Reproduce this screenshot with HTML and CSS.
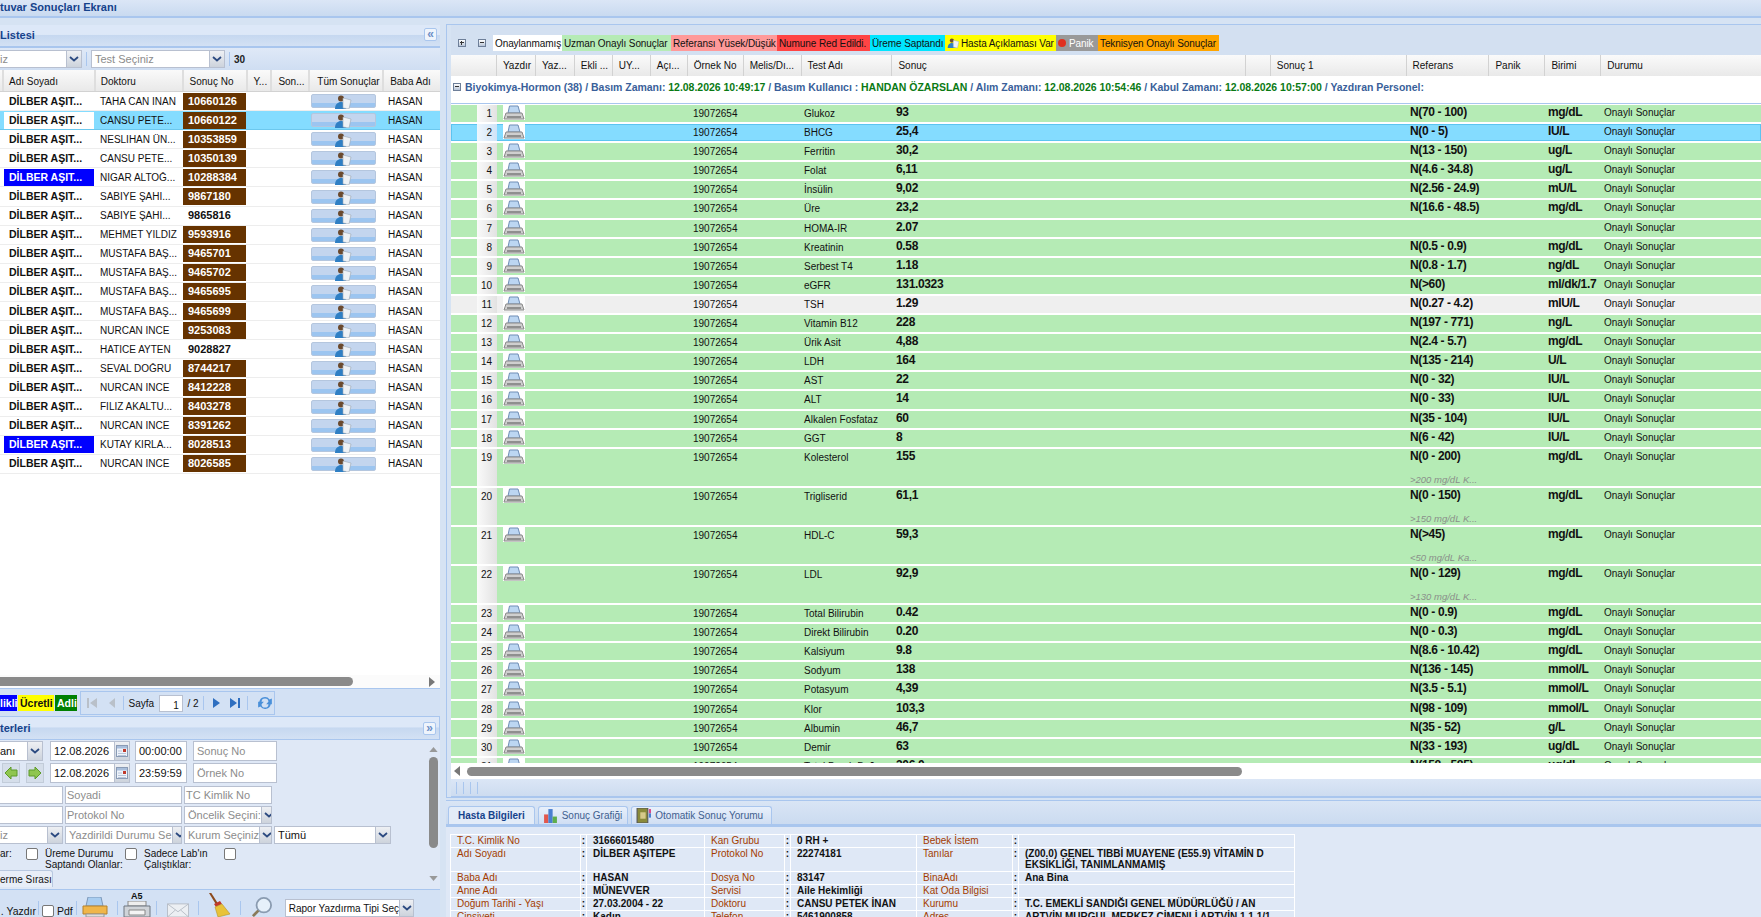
FILE: index.html
```html
<!DOCTYPE html>
<html lang="tr">
<head>
    <meta charset="UTF-8">
    <title>Kuvar Sonuçları Ekranı</title>
    <link rel="stylesheet" href="styles.css">
</head>
<body>
    <svg class="defs" width="0" height="0">
        <symbol id="printer" viewBox="0 0 22 15">
            <path d="M6.500 1h8.500l2 7H5z" fill="#bcd6f2" stroke="#6f8db5"/>
            <path d="M3 8h16l2 6H1z" fill="#cfcfcf" stroke="#8a8a8a"/>
            <rect x="4" y="11" width="14" height="2" fill="#8f8f8f"/>
        </symbol>
        <symbol id="chev" viewBox="0 0 10 6">
            <path d="M1 1l4 3.500L9 1" fill="none" stroke="#2c4a80" stroke-width="1.800"/>
        </symbol>
        <symbol id="person" viewBox="0 0 20 14">
            <circle cx="7" cy="3.500" r="3" fill="#6b4a2e"/>
            <path d="M1 14c0-5 3-7 6-7s5 2 5 7z" fill="#2f7fc4"/>
            <path d="M9 3l8 2-2 9-6-1z" fill="#eef2f6" stroke="#9aa6b2" stroke-width=".6"/>
        </symbol>
        <symbol id="cal" viewBox="0 0 12 12">
            <rect x=".5" y=".5" width="11" height="11" fill="#eef3fa" stroke="#8a9bb5"/>
            <rect x="1" y="1" width="10" height="2.500" fill="#a9bedb"/>
            <rect x="7" y="4" width="3" height="3" fill="#c0392b"/>
            <path d="M2 6h4M2 8.500h8M2 10.500h8" stroke="#b9c6da"/>
        </symbol>
    </svg>

    <header class="topbar"><span class="title-text">tuvar Sonuçları Ekranı</span></header>

    <div class="main">
        <aside class="left">
            <div class="panel-title list-title">
                <span class="title-text">Listesi</span>
                <span class="tool-btn">«</span>
            </div>
            <div class="list-toolbar">
                <div class="fld w-sel1 hint">iz<span class="arr"><svg class="chev"><use href="#chev"/></svg></span></div>
                <i class="sep"></i>
                <div class="fld w-sel2 hint">Test Seçiniz<span class="arr"><svg class="chev"><use href="#chev"/></svg></span></div>
                <i class="sep"></i>
                <b class="count">30</b>
            </div>

            <div class="list-row list-head">
                <span class="c-edge"></span>
                <span class="h-name">Adı Soyadı</span>
                <span class="h-doc">Doktoru</span>
                <span class="h-no">Sonuç No</span>
                <span class="h-y">Y...</span>
                <span class="h-son">Son...</span>
                <span class="h-all">Tüm Sonuçlar</span>
                <span class="h-baba">Baba Adı</span>
            </div>

            <div class="list-body">
                <div class="list-row"><span class="c-edge"></span><b class="c-name">DİLBER AŞIT...</b><span class="c-doc">TAHA CAN İNAN</span><b class="c-no">10660126</b><span class="c-blank"></span><span class="c-all"><svg class="pic"><use href="#person"/></svg></span><span class="c-baba">HASAN</span></div>
                <div class="list-row sel"><span class="c-edge"></span><b class="c-name">DİLBER AŞIT...</b><span class="c-doc">CANSU PETE...</span><b class="c-no">10660122</b><span class="c-blank"></span><span class="c-all"><svg class="pic"><use href="#person"/></svg></span><span class="c-baba">HASAN</span></div>
                <div class="list-row"><span class="c-edge"></span><b class="c-name">DİLBER AŞIT...</b><span class="c-doc">NESLİHAN ÜN...</span><b class="c-no">10353859</b><span class="c-blank"></span><span class="c-all"><svg class="pic"><use href="#person"/></svg></span><span class="c-baba">HASAN</span></div>
                <div class="list-row"><span class="c-edge"></span><b class="c-name">DİLBER AŞIT...</b><span class="c-doc">CANSU PETE...</span><b class="c-no">10350139</b><span class="c-blank"></span><span class="c-all"><svg class="pic"><use href="#person"/></svg></span><span class="c-baba">HASAN</span></div>
                <div class="list-row"><span class="c-edge"></span><b class="c-name blue">DİLBER AŞIT...</b><span class="c-doc">NİGAR ALTOĞ...</span><b class="c-no">10288384</b><span class="c-blank"></span><span class="c-all"><svg class="pic"><use href="#person"/></svg></span><span class="c-baba">HASAN</span></div>
                <div class="list-row"><span class="c-edge"></span><b class="c-name">DİLBER AŞIT...</b><span class="c-doc">SABİYE ŞAHİ...</span><b class="c-no">9867180</b><span class="c-blank"></span><span class="c-all"><svg class="pic"><use href="#person"/></svg></span><span class="c-baba">HASAN</span></div>
                <div class="list-row"><span class="c-edge"></span><b class="c-name">DİLBER AŞIT...</b><span class="c-doc">SABİYE ŞAHİ...</span><b class="c-no plain">9865816</b><span class="c-blank"></span><span class="c-all"><svg class="pic"><use href="#person"/></svg></span><span class="c-baba">HASAN</span></div>
                <div class="list-row"><span class="c-edge"></span><b class="c-name">DİLBER AŞIT...</b><span class="c-doc">MEHMET YILDIZ</span><b class="c-no">9593916</b><span class="c-blank"></span><span class="c-all"><svg class="pic"><use href="#person"/></svg></span><span class="c-baba">HASAN</span></div>
                <div class="list-row"><span class="c-edge"></span><b class="c-name">DİLBER AŞIT...</b><span class="c-doc">MUSTAFA BAŞ...</span><b class="c-no">9465701</b><span class="c-blank"></span><span class="c-all"><svg class="pic"><use href="#person"/></svg></span><span class="c-baba">HASAN</span></div>
                <div class="list-row"><span class="c-edge"></span><b class="c-name">DİLBER AŞIT...</b><span class="c-doc">MUSTAFA BAŞ...</span><b class="c-no">9465702</b><span class="c-blank"></span><span class="c-all"><svg class="pic"><use href="#person"/></svg></span><span class="c-baba">HASAN</span></div>
                <div class="list-row"><span class="c-edge"></span><b class="c-name">DİLBER AŞIT...</b><span class="c-doc">MUSTAFA BAŞ...</span><b class="c-no">9465695</b><span class="c-blank"></span><span class="c-all"><svg class="pic"><use href="#person"/></svg></span><span class="c-baba">HASAN</span></div>
                <div class="list-row"><span class="c-edge"></span><b class="c-name">DİLBER AŞIT...</b><span class="c-doc">MUSTAFA BAŞ...</span><b class="c-no">9465699</b><span class="c-blank"></span><span class="c-all"><svg class="pic"><use href="#person"/></svg></span><span class="c-baba">HASAN</span></div>
                <div class="list-row"><span class="c-edge"></span><b class="c-name">DİLBER AŞIT...</b><span class="c-doc">NURCAN İNCE</span><b class="c-no">9253083</b><span class="c-blank"></span><span class="c-all"><svg class="pic"><use href="#person"/></svg></span><span class="c-baba">HASAN</span></div>
                <div class="list-row"><span class="c-edge"></span><b class="c-name">DİLBER AŞIT...</b><span class="c-doc">HATİCE AYTEN</span><b class="c-no plain">9028827</b><span class="c-blank"></span><span class="c-all"><svg class="pic"><use href="#person"/></svg></span><span class="c-baba">HASAN</span></div>
                <div class="list-row"><span class="c-edge"></span><b class="c-name">DİLBER AŞIT...</b><span class="c-doc">SEVAL DOĞRU</span><b class="c-no">8744217</b><span class="c-blank"></span><span class="c-all"><svg class="pic"><use href="#person"/></svg></span><span class="c-baba">HASAN</span></div>
                <div class="list-row"><span class="c-edge"></span><b class="c-name">DİLBER AŞIT...</b><span class="c-doc">NURCAN İNCE</span><b class="c-no">8412228</b><span class="c-blank"></span><span class="c-all"><svg class="pic"><use href="#person"/></svg></span><span class="c-baba">HASAN</span></div>
                <div class="list-row"><span class="c-edge"></span><b class="c-name">DİLBER AŞIT...</b><span class="c-doc">FİLİZ AKALTU...</span><b class="c-no">8403278</b><span class="c-blank"></span><span class="c-all"><svg class="pic"><use href="#person"/></svg></span><span class="c-baba">HASAN</span></div>
                <div class="list-row"><span class="c-edge"></span><b class="c-name">DİLBER AŞIT...</b><span class="c-doc">NURCAN İNCE</span><b class="c-no">8391262</b><span class="c-blank"></span><span class="c-all"><svg class="pic"><use href="#person"/></svg></span><span class="c-baba">HASAN</span></div>
                <div class="list-row"><span class="c-edge"></span><b class="c-name blue">DİLBER AŞIT...</b><span class="c-doc">KUTAY KIRLA...</span><b class="c-no">8028513</b><span class="c-blank"></span><span class="c-all"><svg class="pic"><use href="#person"/></svg></span><span class="c-baba">HASAN</span></div>
                <div class="list-row"><span class="c-edge"></span><b class="c-name">DİLBER AŞIT...</b><span class="c-doc">NURCAN İNCE</span><b class="c-no">8026585</b><span class="c-blank"></span><span class="c-all"><svg class="pic"><use href="#person"/></svg></span><span class="c-baba">HASAN</span></div>
            </div>

            <div class="list-scroll">
                <span class="thumb-h"></span>
                <svg class="arrow-r" viewBox="0 0 6 10"><path d="M0 0l6 5-6 5z" fill="#777"/></svg>
            </div>

            <div class="pager-bar">
                <b class="tag tag-blue">likli</b>
                <b class="tag tag-yellow">Ücretli</b>
                <b class="tag tag-green">Adli</b>
                <div class="pager">
                    <svg class="pg" viewBox="0 0 12 12"><path d="M1 1h2v10H1zM11 1v10L4 6z" fill="#b9c0c9"/></svg>
                    <svg class="pg" viewBox="0 0 12 12"><path d="M9 1v10L3 6z" fill="#b9c0c9"/></svg>
                    <i class="sep"></i>
                    <span class="pg-label">Sayfa</span>
                    <span class="pg-input">1</span>
                    <span class="pg-label">/ 2</span>
                    <i class="sep"></i>
                    <svg class="pg" viewBox="0 0 12 12"><path d="M3 1v10l7-5z" fill="#2f6fc0"/></svg>
                    <svg class="pg" viewBox="0 0 12 12"><path d="M1 1v10l7-5zM9 1h2v10H9z" fill="#2f6fc0"/></svg>
                    <i class="sep"></i>
                    <svg class="pg pg-refresh" viewBox="0 0 14 14"><path d="M2 6a5 5 0 0 1 9-2l2-1v5H8l2-2a3 3 0 0 0-6 0zM12 8a5 5 0 0 1-9 2l-2 1V6h5L4 8a3 3 0 0 0 6 0z" fill="#4a90d9"/></svg>
                </div>
            </div>

            <div class="panel-title crit-title">
                <span class="title-text">terleri</span>
                <span class="tool-btn">»</span>
            </div>

            <div class="crit">
                <div class="crit-form">
                    <div class="crit-row r-top">
                        <div class="fld w-43">anı<span class="arr"><svg class="chev"><use href="#chev"/></svg></span></div>
                        <div class="fld w-date">12.08.2026<span class="arr"><svg class="cal"><use href="#cal"/></svg></span></div>
                        <div class="fld w-time">00:00:00</div>
                        <div class="fld w-no hint">Sonuç No</div>
                    </div>
                    <div class="crit-row r-top r-last">
                        <div class="nav-btns">
                            <span class="nav-btn"><svg viewBox="0 0 14 14"><path d="M7 1v3h6v6H7v3L1 7z" fill="#8fc64f" stroke="#5c9a2a"/></svg></span>
                            <span class="nav-btn"><svg viewBox="0 0 14 14"><path d="M7 1v3H1v6h6v3l6-6z" fill="#8fc64f" stroke="#5c9a2a"/></svg></span>
                        </div>
                        <div class="fld w-date">12.08.2026<span class="arr"><svg class="cal"><use href="#cal"/></svg></span></div>
                        <div class="fld w-time">23:59:59</div>
                        <div class="fld w-no hint">Örnek No</div>
                    </div>
                    <div class="crit-row r-mid">
                        <div class="fld f-63"></div>
                        <div class="fld f-117 hint tight">Soyadi</div>
                        <div class="fld f-88 hint tight">TC Kimlik No</div>
                    </div>
                    <div class="crit-row r-mid">
                        <div class="fld f-63"></div>
                        <div class="fld f-117 hint tight">Protokol No</div>
                        <div class="fld f-88 hint">Öncelik Seçini:<span class="arr"><svg class="chev"><use href="#chev"/></svg></span></div>
                    </div>
                    <div class="crit-row r-mid">
                        <div class="fld f-63 hint">iz<span class="arr"><svg class="chev"><use href="#chev"/></svg></span></div>
                        <div class="fld f-117 hint">Yazdirildi Durumu Se<span class="arr"><svg class="chev"><use href="#chev"/></svg></span></div>
                        <div class="fld f-88 hint">Kurum Seçiniz<span class="arr"><svg class="chev"><use href="#chev"/></svg></span></div>
                        <div class="fld f-117">Tümü<span class="arr"><svg class="chev"><use href="#chev"/></svg></span></div>
                    </div>
                    <div class="check-row">
                        <span class="ck-label ck-a">ar:</span><i class="ck"></i>
                        <span class="ck-label ck-b">Üreme Durumu Saptandı Olanlar:</span><i class="ck"></i>
                        <span class="ck-label ck-c">Sadece Lab'ın Çalıştıklar:</span><i class="ck"></i>
                    </div>
                    <div class="crit-tab">erme Sırası</div>
                </div>
                <div class="crit-scroll">
                    <svg class="sc-arrow" viewBox="0 0 10 6"><path d="M0 6l5-6 5 6z" fill="#999"/></svg>
                    <span class="thumb-v"></span>
                    <svg class="sc-arrow" viewBox="0 0 10 6"><path d="M0 0l5 6 5-6z" fill="#999"/></svg>
                </div>
            </div>

            <div class="bottom-tools">
                <span class="bt-label bt-yazdir">. Yazdır</span>
                <i class="sep"></i>
                <i class="ck m3"></i>
                <span class="bt-label m3">Pdf</span>
                <i class="sep m3"></i>
                <svg class="bt-icon m5" viewBox="0 0 26 20"><path d="M6 0h13l2 9H4z" fill="#a9cdf0" stroke="#7d97b8"/><path d="M1 9h24v8H1z" fill="#f0b64a" stroke="#b5812a"/><path d="M4 17h18v3H4z" fill="#ddd" stroke="#999"/></svg>
                <i class="sep m9"></i>
                <span class="a5 m5"><b class="a5-text">A5</b><svg viewBox="0 0 28 16"><path d="M5 0h18v5H5z" fill="#eee" stroke="#888"/><path d="M1 5h26v11H1z" fill="#cfd3d8" stroke="#6f7680"/><path d="M6 9h16v5H6z" fill="#f4f4f4" stroke="#888"/></svg></span>
                <i class="sep m5"></i>
                <svg class="bt-icon env m8" viewBox="0 0 26 16"><path d="M1 1h24v15H1z" fill="#eceff3" stroke="#b3bac4"/><path d="M1 1l12 9L25 1M1 16l9-8M25 16l-9-8" fill="none" stroke="#b3bac4"/></svg>
                <i class="sep m7"></i>
                <svg class="bt-icon broom m7" viewBox="0 0 26 24"><path d="M3 0l2-.5 7 11-2 1z" fill="#8c4a1c"/><path d="M8 11l6-3 2 3-6 3z" fill="#c0392b"/><path d="M9 14l7-3 8 10-12 3z" fill="#e8c33a" stroke="#b8932a" stroke-width=".6"/></svg>
                <i class="sep m8"></i>
                <svg class="bt-icon lens m9" viewBox="0 0 24 22"><circle cx="14" cy="9" r="8" fill="#e6f0fa" stroke="#8a9bb0" stroke-width="2"/><path d="M8 15l-6 6" stroke="#8a7a5a" stroke-width="3"/></svg>
                <div class="fld w-report">Rapor Yazdırma Tipi Seç<span class="arr"><svg class="chev"><use href="#chev"/></svg></span></div>
            </div>
        </aside>

        <section class="right">
            <div class="results">
                <div class="legend">
                    <span class="lg-icons"><i class="box plus"></i><i class="box"></i></span>
                    <span class="lg lg-white">Onaylanmamış</span>
                    <span class="lg lg-green">Uzman Onaylı Sonuçlar</span>
                    <span class="lg lg-pink">Referansı Yüsek/Düşük</span>
                    <span class="lg lg-red">Numune Red Edildi.</span>
                    <span class="lg lg-cyan">Üreme Saptandı</span>
                    <span class="lg lg-yellow"><svg class="lg-pic"><use href="#person"/></svg>Hasta Açıklaması Var</span>
                    <span class="lg lg-grey"><i class="dot"></i>Panik</span>
                    <span class="lg lg-orange">Teknisyen Onaylı Sonuçlar</span>
                </div>

                <div class="res-head">
                    <span class="rh-blank"></span>
                    <span class="rh-1">Yazdır</span>
                    <span class="rh-1">Yaz...</span>
                    <span class="rh-2">Ekli ...</span>
                    <span class="rh-2">UY...</span>
                    <span class="rh-3">Açı...</span>
                    <span class="rh-4">Örnek No</span>
                    <span class="rh-5">Melis/Dı...</span>
                    <span class="rh-6">Test Adı</span>
                    <span class="rh-7">Sonuç</span>
                    <span class="rh-8"></span>
                    <span class="rh-9">Sonuç 1</span>
                    <span class="rh-10">Referans</span>
                    <span class="rh-11">Panik</span>
                    <span class="rh-11">Birimi</span>
                    <span class="rh-12">Durumu</span>
                </div>

                <div class="group-row">
                    <i class="box"></i>
                    <span class="group-text">Biyokimya-Hormon (38) / Basım Zamanı: <em>12.08.2026 10:49:17</em> / Basım Kullanıcı : <em>HANDAN ÖZARSLAN</em> / Alım Zamanı: <em>12.08.2026 10:54:46</em> / Kabul Zamanı: <em>12.08.2026 10:57:00</em> / Yazdıran Personel:</span>
                </div>

                <div class="res-body">
                    <div class="res-row"><span></span><span class="r-num">1</span><span class="r-prn"><svg class="prn"><use href="#printer"/></svg></span><span class="r-no">19072654</span><span class="r-test">Glukoz</span><b class="r-val">93</b><b class="r-ref">N(70 - 100)</b><b class="r-unit">mg/dL</b><span class="r-st">Onaylı Sonuçlar</span></div>
                    <div class="res-row sel"><span></span><span class="r-num">2</span><span class="r-prn"><svg class="prn"><use href="#printer"/></svg></span><span class="r-no">19072654</span><span class="r-test">BHCG</span><b class="r-val">25,4</b><b class="r-ref">N(0 - 5)</b><b class="r-unit">IU/L</b><span class="r-st">Onaylı Sonuçlar</span></div>
                    <div class="res-row"><span></span><span class="r-num">3</span><span class="r-prn"><svg class="prn"><use href="#printer"/></svg></span><span class="r-no">19072654</span><span class="r-test">Ferritin</span><b class="r-val">30,2</b><b class="r-ref">N(13 - 150)</b><b class="r-unit">ug/L</b><span class="r-st">Onaylı Sonuçlar</span></div>
                    <div class="res-row"><span></span><span class="r-num">4</span><span class="r-prn"><svg class="prn"><use href="#printer"/></svg></span><span class="r-no">19072654</span><span class="r-test">Folat</span><b class="r-val">6,11</b><b class="r-ref">N(4.6 - 34.8)</b><b class="r-unit">ug/L</b><span class="r-st">Onaylı Sonuçlar</span></div>
                    <div class="res-row"><span></span><span class="r-num">5</span><span class="r-prn"><svg class="prn"><use href="#printer"/></svg></span><span class="r-no">19072654</span><span class="r-test">İnsülin</span><b class="r-val">9,02</b><b class="r-ref">N(2.56 - 24.9)</b><b class="r-unit">mU/L</b><span class="r-st">Onaylı Sonuçlar</span></div>
                    <div class="res-row"><span></span><span class="r-num">6</span><span class="r-prn"><svg class="prn"><use href="#printer"/></svg></span><span class="r-no">19072654</span><span class="r-test">Üre</span><b class="r-val">23,2</b><b class="r-ref">N(16.6 - 48.5)</b><b class="r-unit">mg/dL</b><span class="r-st">Onaylı Sonuçlar</span></div>
                    <div class="res-row"><span></span><span class="r-num">7</span><span class="r-prn"><svg class="prn"><use href="#printer"/></svg></span><span class="r-no">19072654</span><span class="r-test">HOMA-IR</span><b class="r-val">2.07</b><b class="r-ref"></b><b class="r-unit"></b><span class="r-st">Onaylı Sonuçlar</span></div>
                    <div class="res-row"><span></span><span class="r-num">8</span><span class="r-prn"><svg class="prn"><use href="#printer"/></svg></span><span class="r-no">19072654</span><span class="r-test">Kreatinin</span><b class="r-val">0.58</b><b class="r-ref">N(0.5 - 0.9)</b><b class="r-unit">mg/dL</b><span class="r-st">Onaylı Sonuçlar</span></div>
                    <div class="res-row"><span></span><span class="r-num">9</span><span class="r-prn"><svg class="prn"><use href="#printer"/></svg></span><span class="r-no">19072654</span><span class="r-test">Serbest T4</span><b class="r-val">1.18</b><b class="r-ref">N(0.8 - 1.7)</b><b class="r-unit">ng/dL</b><span class="r-st">Onaylı Sonuçlar</span></div>
                    <div class="res-row"><span></span><span class="r-num">10</span><span class="r-prn"><svg class="prn"><use href="#printer"/></svg></span><span class="r-no">19072654</span><span class="r-test">eGFR</span><b class="r-val">131.0323</b><b class="r-ref">N(&gt;60)</b><b class="r-unit">ml/dk/1.7</b><span class="r-st">Onaylı Sonuçlar</span></div>
                    <div class="res-row grey"><span></span><span class="r-num">11</span><span class="r-prn"><svg class="prn"><use href="#printer"/></svg></span><span class="r-no">19072654</span><span class="r-test">TSH</span><b class="r-val">1.29</b><b class="r-ref">N(0.27 - 4.2)</b><b class="r-unit">mIU/L</b><span class="r-st">Onaylı Sonuçlar</span></div>
                    <div class="res-row"><span></span><span class="r-num">12</span><span class="r-prn"><svg class="prn"><use href="#printer"/></svg></span><span class="r-no">19072654</span><span class="r-test">Vitamin B12</span><b class="r-val">228</b><b class="r-ref">N(197 - 771)</b><b class="r-unit">ng/L</b><span class="r-st">Onaylı Sonuçlar</span></div>
                    <div class="res-row"><span></span><span class="r-num">13</span><span class="r-prn"><svg class="prn"><use href="#printer"/></svg></span><span class="r-no">19072654</span><span class="r-test">Ürik Asit</span><b class="r-val">4,88</b><b class="r-ref">N(2.4 - 5.7)</b><b class="r-unit">mg/dL</b><span class="r-st">Onaylı Sonuçlar</span></div>
                    <div class="res-row"><span></span><span class="r-num">14</span><span class="r-prn"><svg class="prn"><use href="#printer"/></svg></span><span class="r-no">19072654</span><span class="r-test">LDH</span><b class="r-val">164</b><b class="r-ref">N(135 - 214)</b><b class="r-unit">U/L</b><span class="r-st">Onaylı Sonuçlar</span></div>
                    <div class="res-row"><span></span><span class="r-num">15</span><span class="r-prn"><svg class="prn"><use href="#printer"/></svg></span><span class="r-no">19072654</span><span class="r-test">AST</span><b class="r-val">22</b><b class="r-ref">N(0 - 32)</b><b class="r-unit">IU/L</b><span class="r-st">Onaylı Sonuçlar</span></div>
                    <div class="res-row"><span></span><span class="r-num">16</span><span class="r-prn"><svg class="prn"><use href="#printer"/></svg></span><span class="r-no">19072654</span><span class="r-test">ALT</span><b class="r-val">14</b><b class="r-ref">N(0 - 33)</b><b class="r-unit">IU/L</b><span class="r-st">Onaylı Sonuçlar</span></div>
                    <div class="res-row"><span></span><span class="r-num">17</span><span class="r-prn"><svg class="prn"><use href="#printer"/></svg></span><span class="r-no">19072654</span><span class="r-test">Alkalen Fosfataz</span><b class="r-val">60</b><b class="r-ref">N(35 - 104)</b><b class="r-unit">IU/L</b><span class="r-st">Onaylı Sonuçlar</span></div>
                    <div class="res-row"><span></span><span class="r-num">18</span><span class="r-prn"><svg class="prn"><use href="#printer"/></svg></span><span class="r-no">19072654</span><span class="r-test">GGT</span><b class="r-val">8</b><b class="r-ref">N(6 - 42)</b><b class="r-unit">IU/L</b><span class="r-st">Onaylı Sonuçlar</span></div>
                    <div class="res-row tall"><span></span><span class="r-num">19</span><span class="r-prn"><svg class="prn"><use href="#printer"/></svg></span><span class="r-no">19072654</span><span class="r-test">Kolesterol</span><b class="r-val">155</b><div class="r-ref"><b>N(0 - 200)</b><i class="r-note">&gt;200 mg/dL K...</i></div><b class="r-unit">mg/dL</b><span class="r-st">Onaylı Sonuçlar</span></div>
                    <div class="res-row tall"><span></span><span class="r-num">20</span><span class="r-prn"><svg class="prn"><use href="#printer"/></svg></span><span class="r-no">19072654</span><span class="r-test">Trigliserid</span><b class="r-val">61,1</b><div class="r-ref"><b>N(0 - 150)</b><i class="r-note">&gt;150 mg/dL K...</i></div><b class="r-unit">mg/dL</b><span class="r-st">Onaylı Sonuçlar</span></div>
                    <div class="res-row tall"><span></span><span class="r-num">21</span><span class="r-prn"><svg class="prn"><use href="#printer"/></svg></span><span class="r-no">19072654</span><span class="r-test">HDL-C</span><b class="r-val">59,3</b><div class="r-ref"><b>N(&gt;45)</b><i class="r-note">&lt;50 mg/dL Ka...</i></div><b class="r-unit">mg/dL</b><span class="r-st">Onaylı Sonuçlar</span></div>
                    <div class="res-row tall"><span></span><span class="r-num">22</span><span class="r-prn"><svg class="prn"><use href="#printer"/></svg></span><span class="r-no">19072654</span><span class="r-test">LDL</span><b class="r-val">92,9</b><div class="r-ref"><b>N(0 - 129)</b><i class="r-note">&gt;130 mg/dL K...</i></div><b class="r-unit">mg/dL</b><span class="r-st">Onaylı Sonuçlar</span></div>
                    <div class="res-row"><span></span><span class="r-num">23</span><span class="r-prn"><svg class="prn"><use href="#printer"/></svg></span><span class="r-no">19072654</span><span class="r-test">Total Bilirubin</span><b class="r-val">0.42</b><b class="r-ref">N(0 - 0.9)</b><b class="r-unit">mg/dL</b><span class="r-st">Onaylı Sonuçlar</span></div>
                    <div class="res-row"><span></span><span class="r-num">24</span><span class="r-prn"><svg class="prn"><use href="#printer"/></svg></span><span class="r-no">19072654</span><span class="r-test">Direkt Bilirubin</span><b class="r-val">0.20</b><b class="r-ref">N(0 - 0.3)</b><b class="r-unit">mg/dL</b><span class="r-st">Onaylı Sonuçlar</span></div>
                    <div class="res-row"><span></span><span class="r-num">25</span><span class="r-prn"><svg class="prn"><use href="#printer"/></svg></span><span class="r-no">19072654</span><span class="r-test">Kalsiyum</span><b class="r-val">9.8</b><b class="r-ref">N(8.6 - 10.42)</b><b class="r-unit">mg/dL</b><span class="r-st">Onaylı Sonuçlar</span></div>
                    <div class="res-row"><span></span><span class="r-num">26</span><span class="r-prn"><svg class="prn"><use href="#printer"/></svg></span><span class="r-no">19072654</span><span class="r-test">Sodyum</span><b class="r-val">138</b><b class="r-ref">N(136 - 145)</b><b class="r-unit">mmol/L</b><span class="r-st">Onaylı Sonuçlar</span></div>
                    <div class="res-row"><span></span><span class="r-num">27</span><span class="r-prn"><svg class="prn"><use href="#printer"/></svg></span><span class="r-no">19072654</span><span class="r-test">Potasyum</span><b class="r-val">4,39</b><b class="r-ref">N(3.5 - 5.1)</b><b class="r-unit">mmol/L</b><span class="r-st">Onaylı Sonuçlar</span></div>
                    <div class="res-row"><span></span><span class="r-num">28</span><span class="r-prn"><svg class="prn"><use href="#printer"/></svg></span><span class="r-no">19072654</span><span class="r-test">Klor</span><b class="r-val">103,3</b><b class="r-ref">N(98 - 109)</b><b class="r-unit">mmol/L</b><span class="r-st">Onaylı Sonuçlar</span></div>
                    <div class="res-row"><span></span><span class="r-num">29</span><span class="r-prn"><svg class="prn"><use href="#printer"/></svg></span><span class="r-no">19072654</span><span class="r-test">Albumin</span><b class="r-val">46,7</b><b class="r-ref">N(35 - 52)</b><b class="r-unit">g/L</b><span class="r-st">Onaylı Sonuçlar</span></div>
                    <div class="res-row"><span></span><span class="r-num">30</span><span class="r-prn"><svg class="prn"><use href="#printer"/></svg></span><span class="r-no">19072654</span><span class="r-test">Demir</span><b class="r-val">63</b><b class="r-ref">N(33 - 193)</b><b class="r-unit">ug/dL</b><span class="r-st">Onaylı Sonuçlar</span></div>
                    <div class="res-row"><span></span><span class="r-num">31</span><span class="r-prn"><svg class="prn"><use href="#printer"/></svg></span><span class="r-no">19072654</span><span class="r-test">Total Demir Bağ.</span><b class="r-val">306.0</b><b class="r-ref">N(158 - 585)</b><b class="r-unit">ug/dL</b><span class="r-st">Onaylı Sonuçlar</span></div>
                </div>

                <div class="res-scroll">
                    <svg class="arrow-l" viewBox="0 0 6 10"><path d="M6 0L0 5l6 5z" fill="#777"/></svg>
                    <span class="thumb-res"></span>
                </div>
                <div class="res-foot"><i></i><i></i><i></i><i></i></div>
            </div>

            <div class="tabs">
                <span class="tab active">Hasta Bilgileri</span>
                <span class="tab tab-chart"><svg class="tab-ic" viewBox="0 0 14 14"><path d="M1 6h4v8H1z" fill="#e2574c"/><path d="M5 1h4v13H5z" fill="#4a7fd0"/><path d="M9 8h4v6H9z" fill="#5fae4a"/></svg>Sonuç Grafiği</span>
                <span class="tab"><svg class="tab-ic" viewBox="0 0 14 14"><path d="M1 0h10v14H1z" fill="#8a8a3a" stroke="#555"/><rect x="4" y="4" width="5" height="6" fill="#d6c98a"/><path d="M12 1h2v4h-2z" fill="#d84a8a"/><path d="M12 5h2v4h-2z" fill="#4a7fd0"/></svg>Otomatik Sonuç Yorumu</span>
            </div>

            <div class="info">
                <table class="info-table">
                    <tr><td class="lb">T.C. Kimlik No</td><td class="cl">:</td><td class="vl">31666015480</td><td class="lb">Kan Grubu</td><td class="cl">:</td><td class="vl">0 RH +</td><td class="lb">Bebek İstem</td><td class="cl">:</td><td class="vl"></td></tr>
                    <tr class="tall-info"><td class="lb">Adı Soyadı</td><td class="cl">:</td><td class="vl">DİLBER AŞITEPE</td><td class="lb">Protokol No</td><td class="cl">:</td><td class="vl">22274181</td><td class="lb">Tanılar</td><td class="cl">:</td><td class="vl">(Z00.0) GENEL TIBBİ MUAYENE (E55.9) VİTAMİN D EKSİKLİĞİ, TANIMLANMAMIŞ</td></tr>
                    <tr><td class="lb">Baba Adı</td><td class="cl">:</td><td class="vl">HASAN</td><td class="lb">Dosya No</td><td class="cl">:</td><td class="vl">83147</td><td class="lb">BinaAdı</td><td class="cl">:</td><td class="vl">Ana Bina</td></tr>
                    <tr><td class="lb">Anne Adı</td><td class="cl">:</td><td class="vl">MÜNEVVER</td><td class="lb">Servisi</td><td class="cl">:</td><td class="vl">Aile Hekimliği</td><td class="lb">Kat Oda Bilgisi</td><td class="cl">:</td><td class="vl"></td></tr>
                    <tr><td class="lb">Doğum Tarihi - Yaşı</td><td class="cl">:</td><td class="vl">27.03.2004 - 22</td><td class="lb">Doktoru</td><td class="cl">:</td><td class="vl">CANSU PETEK İNAN</td><td class="lb">Kurumu</td><td class="cl">:</td><td class="vl">T.C. EMEKLİ SANDIĞI GENEL MÜDÜRLÜĞÜ / AN</td></tr>
                    <tr><td class="lb">Cinsiyeti</td><td class="cl">:</td><td class="vl">Kadın</td><td class="lb">Telefon</td><td class="cl">:</td><td class="vl">5461900858</td><td class="lb">Adres</td><td class="cl">:</td><td class="vl">ARTVİN MURGUL MERKEZ ÇİMENLİ ARTVİN 1 1 1/1</td></tr>
                </table>
            </div>
        </section>
    </div>
</body>
</html>
```

FILE: styles.css
```css
* {
    box-sizing: border-box;
}
body, html {
    margin: 0;
    padding: 0;
    width: 1761px;
    height: 917px;
    overflow: hidden;
    font-family: 'Liberation Sans', Arial, sans-serif;
    font-size: 10px;
    color: #111;
    background-color: #d6e3f3;
}
.defs {
    position: absolute;
}
.topbar {
    height: 18px;
    line-height: 14px;
    background: linear-gradient(#dbe6f6, #c9daf0);
    border-bottom: 2px solid #a9c6ee;
}
.title-text {
    font-size: 11px;
    font-weight: bold;
    color: #15428b;
}
.main {
    display: flex;
    height: 899px;
}

/* left side */
.left {
    width: 440px;
    height: 899px;
    padding-top: 7px;
    display: flex;
    flex-direction: column;
    flex-shrink: 0;
}
.panel-title {
    height: 23px;
    flex-shrink: 0;
    display: flex;
    align-items: center;
    justify-content: space-between;
    padding-right: 3px;
    background: linear-gradient(#dde8f8 45%, #c6d8f0 50%, #d3e1f4);
    border-bottom: 2px solid #a9c6ee;
}
.list-title {
    padding-bottom: 2px;
}
.tool-btn {
    width: 13px;
    height: 13px;
    line-height: 10px;
    text-align: center;
    font-size: 12px;
    font-weight: bold;
    color: #6c8fc7;
    background-color: #eef4fc;
    border: 1px solid #a9c6ee;
    border-radius: 2px;
}
.list-toolbar {
    height: 22px;
    flex-shrink: 0;
    display: flex;
    align-items: center;
    gap: 4px;
    background: linear-gradient(#dfe9f7, #cfdef2);
}
.sep {
    display: block;
    width: 1px;
    height: 14px;
    background-color: #a9c6ee;
    flex-shrink: 0;
}
.count {
    font-size: 10px;
    color: #222;
}
.fld {
    display: flex;
    align-items: center;
    justify-content: space-between;
    height: 100%;
    padding-left: 3px;
    font-size: 11px;
    white-space: nowrap;
    overflow: hidden;
    background-color: #fff;
    border: 1px solid #b8c0d0;
    flex-shrink: 0;
}
.fld.tight {
    padding-left: 1px;
}
.hint {
    color: #8c8c8c;
}
.arr {
    display: flex;
    align-items: center;
    justify-content: center;
    width: 15px;
    height: 100%;
    margin-left: auto;
    flex-shrink: 0;
    background: linear-gradient(#eef0f4, #cdd3dc);
    border-left: 1px solid #b8c0d0;
}
.chev {
    width: 10px;
    height: 6px;
}
.cal {
    width: 12px;
    height: 12px;
}
.w-sel1 {
    width: 82px;
    height: 18px;
    padding-left: 0;
    border-left: 0;
}
.w-sel2 {
    width: 134px;
    height: 18px;
}
.list-row {
    display: flex;
    height: 19.1px;
    align-items: center;
    white-space: nowrap;
    background-color: #fff;
    border-bottom: 1px solid #ededed;
}
.list-head {
    height: 22px;
    flex-shrink: 0;
    background: linear-gradient(#fafafa, #e9e9e9);
    border-bottom: 1px solid #d2d2d2;
}
.list-head span {
    height: 100%;
    line-height: 23px;
    padding-left: 6px;
    border-right: 2px solid #dedede;
    overflow: hidden;
}
.list-head .c-edge {
    width: 3px;
    padding: 0;
    flex-shrink: 0;
}
.h-name { width: 92px; padding-left: 5px !important; }
.h-doc { width: 88px; padding-left: 5px !important; }
.h-no { width: 65px; }
.h-y { width: 24px; padding-left: 5px !important; }
.h-son { width: 38px; }
.h-all { width: 74px; padding-left: 7px !important; }
.h-baba { width: 56px; border-right: 0 !important; }
.list-body {
    flex: 1;
    min-height: 0;
    background-color: #fff;
}
.list-row .c-edge {
    width: 4px;
    height: 100%;
    flex-shrink: 0;
}
.c-name {
    width: 90px;
    height: 17px;
    line-height: 17px;
    padding-left: 5px;
    font-size: 10.5px;
}
.c-name.blue {
    color: #fff;
    background-color: #0000ff;
}
.c-doc {
    width: 89px;
    padding-left: 6px;
    overflow: hidden;
}
.c-no {
    width: 63px;
    height: 17px;
    line-height: 17px;
    padding-left: 5px;
    font-size: 11px;
    color: #fff;
    background-color: #663300;
}
.c-no.plain {
    color: #111;
    background-color: transparent;
}
.c-blank {
    width: 65px;
}
.c-all {
    display: flex;
    justify-content: center;
    width: 65px;
    height: 14px;
    background: linear-gradient(#c3d5ee 70%, #9cc5f0 70%);
    border: 1px solid #b4c6de;
    border-radius: 2px;
}
.pic {
    width: 20px;
    height: 14px;
}
.c-baba {
    padding-left: 12px;
}
.list-row.sel {
    background-color: #84dcff;
    border-bottom: 1px solid #6cc8ee;
}
.list-row.sel .c-name {
    background-color: #fff;
}
.list-scroll {
    height: 13px;
    flex-shrink: 0;
    display: flex;
    align-items: center;
    justify-content: space-between;
    padding-right: 5px;
    background-color: #fbfbfb;
}
.thumb-h {
    width: 353px;
    height: 9px;
    background-color: #8a8a8a;
    border-radius: 0 5px 5px 0;
}
.arrow-r, .arrow-l {
    width: 6px;
    height: 10px;
}
.pager-bar {
    height: 28px;
    flex-shrink: 0;
    display: flex;
    align-items: center;
    gap: 1px;
    padding-top: 1px;
    background-color: #d3e1f4;
    border-top: 1px solid #a9c6ee;
}
.tag {
    height: 16px;
    line-height: 16px;
    padding: 0 2px;
    font-size: 10.5px;
    white-space: nowrap;
}
.tag-blue {
    width: 17px;
    padding: 0;
    color: #fff;
    background-color: #0000ff;
    overflow: hidden;
}
.tag-yellow {
    width: 36px;
    background-color: #ffff00;
}
.tag-green {
    width: 22px;
    color: #fff;
    background-color: #008000;
}
.pager {
    display: flex;
    align-items: center;
    gap: 4.5px;
    height: 24px;
    width: 195px;
    margin-left: 2px;
    padding-left: 4px;
    border: 1px solid #a9c6ee;
}
.pg {
    width: 12px;
    height: 12px;
    margin: 0 1px;
    flex-shrink: 0;
}
.pg + .pg {
    margin-left: 2px;
}
.pg-refresh {
    width: 16px;
    height: 16px;
    margin-left: 5px;
}
.pg-label {
    font-size: 10px;
    white-space: nowrap;
}
.pg-input {
    width: 26px;
    height: 17px;
    line-height: 19px;
    padding-right: 3px;
    text-align: right;
    background-color: #fff;
    border: 1px solid #b8c0d0;
}
.crit-title {
    height: 24px;
    border: 1px solid #a9c6ee;
    border-left: 0;
    padding-right: 3px;
}
.crit {
    display: flex;
    height: 149px;
    flex-shrink: 0;
    background-color: #dfe8f6;
}
.crit-form {
    width: 427px;
    padding-top: 1px;
}
.crit-row {
    display: flex;
    flex-wrap: nowrap;
}
.r-top {
    height: 20px;
    margin-bottom: 2px;
    gap: 5px;
}
.r-last {
    margin-bottom: 3px;
}
.r-mid {
    height: 18px;
    margin-bottom: 2px;
    gap: 2px;
}
.w-43 {
    width: 43px;
    margin-right: 2px;
    border-left: 0;
    padding-left: 0;
}
.w-date {
    width: 80px;
}
.w-time {
    width: 52px;
}
.w-no {
    width: 84px;
    margin-left: 1px;
}
.nav-btns {
    display: flex;
    gap: 6px;
    width: 45px;
    padding-left: 2px;
}
.nav-btn {
    display: flex;
    align-items: center;
    justify-content: center;
    width: 18px;
    height: 20px;
    background-color: #d5deea;
    border: 1px solid #c2ccd9;
}
.nav-btn svg {
    width: 14px;
    height: 14px;
}
.f-63 {
    width: 63px;
    border-left: 0;
    padding-left: 0;
}
.f-117 {
    width: 117px;
}
.f-88 {
    width: 88px;
}
.check-row {
    display: flex;
    height: 22px;
    margin-top: 4px;
    line-height: 11px;
    font-size: 10px;
}
.ck {
    display: block;
    width: 12px;
    height: 12px;
    flex-shrink: 0;
    background-color: #fff;
    border: 1px solid #777;
    border-radius: 2px;
}
.ck-a { width: 26px; }
.ck-b { width: 80px; margin-left: 7px; }
.ck-c { width: 80px; margin-left: 7px; }
.crit-tab {
    width: 53px;
    height: 17px;
    line-height: 17px;
    text-align: right;
    padding-right: 3px;
    white-space: nowrap;
    overflow: hidden;
    background-color: #e8eef8;
    border: 1px solid #b8c8e0;
    border-left: 0;
    border-bottom: 0;
    border-radius: 0 3px 0 0;
}
.crit-scroll {
    flex: 1;
    display: flex;
    flex-direction: column;
    align-items: center;
    justify-content: space-between;
    padding: 7px 0 8px;
}
.sc-arrow {
    width: 9px;
    height: 5px;
}
.thumb-v {
    width: 9px;
    height: 91px;
    margin-bottom: 24px;
    background-color: #8a8a8a;
    border-radius: 5px;
}
.bottom-tools {
    height: 28px;
    flex-shrink: 0;
    display: flex;
    align-items: flex-end;
    overflow: hidden;
    background-color: #d3e1f4;
    border-top: 1px solid #a9c6ee;
}
.bottom-tools .sep {
    margin-bottom: 2px;
}
.m3 { margin-left: 3px; }
.m5 { margin-left: 5px; }
.m7 { margin-left: 7px; }
.m8 { margin-left: 8px; }
.m9 { margin-left: 9px; }
.bt-label {
    font-size: 10.5px;
    line-height: 12px;
    white-space: nowrap;
}
.bt-yazdir {
    width: 38px;
    text-align: right;
    padding-right: 2px;
}
.bt-icon {
    width: 26px;
    height: 20px;
    flex-shrink: 0;
}
.env {
    height: 14px;
}
.broom {
    height: 24px;
}
.lens {
    width: 24px;
}
.a5 {
    display: flex;
    flex-direction: column;
    align-items: center;
    width: 28px;
    flex-shrink: 0;
}
.a5-text {
    font-size: 9px;
    line-height: 9px;
}
.a5 svg {
    width: 28px;
    height: 16px;
}
.w-report {
    width: 129px;
    height: 18px;
    margin-left: 11px;
    font-size: 10px;
}

/* right side */
.right {
    flex: 1;
    min-width: 0;
    padding: 6px 0 0 6px;
}
.results {
    height: 774px;
    padding-left: 4px;
    display: flex;
    flex-direction: column;
    background-color: #d6e3f3;
    border: 1px solid #a9c6ee;
    border-right: 0;
}
.legend {
    display: flex;
    align-items: center;
    height: 30px;
    padding-top: 6px;
    flex-shrink: 0;
    background-color: #d3e0f1;
}
.lg-icons {
    display: flex;
    gap: 12px;
    width: 42px;
    padding-left: 7px;
}
.box {
    display: block;
    position: relative;
    width: 8px;
    height: 8px;
    background: linear-gradient(#fff, #b6c3d6);
    border: 1px solid #6e7f99;
    flex-shrink: 0;
}
.box::before {
    content: "";
    position: absolute;
    left: 1px;
    top: 2px;
    width: 4px;
    height: 1px;
    background-color: #333;
}
.box.plus::after {
    content: "";
    position: absolute;
    left: 2px;
    top: 1px;
    width: 1px;
    height: 4px;
    background-color: #333;
}
.lg {
    display: flex;
    align-items: center;
    height: 16px;
    padding-left: 2px;
    white-space: nowrap;
    overflow: hidden;
    font-size: 10px;
    letter-spacing: -.1px;
}
.lg-white { width: 69px; background-color: #fff; }
.lg-green { width: 109px; background-color: #b5ebb5; }
.lg-pink { width: 106px; background-color: #ff9999; }
.lg-red { width: 93px; background-color: #ff4444; }
.lg-cyan { width: 75px; background-color: #00e5ff; }
.lg-yellow { width: 111px; background-color: #ffff00; }
.lg-grey { width: 42px; color: #fff; background-color: #999; }
.lg-orange { width: 121px; background-color: #ffa500; }
.lg-pic {
    width: 14px;
    height: 12px;
}
.dot {
    width: 8px;
    height: 8px;
    margin-right: 3px;
    border-radius: 50%;
    background-color: #e03020;
}
.res-head {
    display: flex;
    height: 21px;
    flex-shrink: 0;
    line-height: 22px;
    background: linear-gradient(#fafafa, #e9e9e9);
}
.res-head span {
    height: 100%;
    padding-left: 6px;
    white-space: nowrap;
    overflow: hidden;
    border-right: 1px solid #d2d2d2;
}
.rh-blank { width: 46px; }
.rh-1 { width: 39px; }
.rh-2 { width: 38px; }
.rh-3 { width: 37px; }
.rh-4 { width: 56px; }
.rh-5 { width: 58px; }
.rh-6 { width: 91px; }
.rh-7 { width: 354px; }
.rh-8 { width: 25px; }
.rh-9 { width: 136px; }
.rh-10 { width: 83px; }
.rh-11 { width: 56px; }
.rh-12 { width: 160px; border-right: 0 !important; }
.group-row {
    display: flex;
    align-items: flex-start;
    gap: 4px;
    height: 28px;
    padding: 5px 0 0 2px;
    flex-shrink: 0;
    background-color: #fff;
    border-bottom: 1px solid #a9c6ee;
}
.group-row .box {
    margin-top: 2px;
}
.group-text {
    font-size: 10.5px;
    font-weight: bold;
    letter-spacing: -.025px;
    color: #3a5f9a;
    white-space: nowrap;
}
.group-text em {
    font-style: normal;
    color: #0a7a14;
}
.res-body {
    flex: 1;
    min-height: 0;
    padding-top: 1px;
    overflow: hidden;
    background-color: #fff;
}
.res-row {
    display: grid;
    grid-template-columns: 26px 20px 190px 113px 91px 515px 139px 56px 1fr;
    height: 19.1px;
    line-height: 17px;
    white-space: nowrap;
    background-color: #b5ebb5;
    border-bottom: 2px solid #fff;
}
.res-row.sel {
    background-color: #84dcff;
    box-shadow: inset 0 0 0 1px #5cc4f0;
}
.res-row.grey {
    background-color: #efefef;
}
.res-row.tall {
    height: 39.1px;
}
.r-num {
    padding-right: 5px;
    text-align: right;
    background: linear-gradient(90deg, #fafafa, #e2e2e2);
}
.res-row.sel .r-num {
    background: linear-gradient(90deg, #eef6fd, #cfe3f7);
}
.r-prn {
    padding-left: 6px;
}
.prn {
    display: block;
    width: 22px;
    height: 15px;
    background-color: #fff;
}
.r-no {
    padding-left: 6px;
}
.r-test {
    padding-left: 4px;
}
.r-val, .r-ref, .r-unit {
    font-size: 12px;
    letter-spacing: -.35px;
    line-height: 15px;
}
.r-val {
    padding-left: 5px;
}
.r-ref {
    display: flex;
    flex-direction: column;
    justify-content: space-between;
    padding: 0 0 0 4px;
}
.r-unit {
    padding-left: 3px;
}
.r-st {
    padding-left: 3px;
    font-size: 10px;
    line-height: 15px;
}
.r-note {
    font-size: 9.5px;
    font-weight: normal;
    letter-spacing: 0;
    line-height: 12px;
    color: #8a8f8a;
}
.res-scroll {
    display: flex;
    align-items: center;
    gap: 7px;
    height: 16px;
    padding-left: 3px;
    flex-shrink: 0;
    background-color: #fff;
}
.thumb-res {
    width: 775px;
    height: 9px;
    background-color: #8a8a8a;
    border-radius: 5px;
}
.res-foot {
    display: flex;
    gap: 6px;
    align-items: center;
    height: 18px;
    padding-left: 5px;
    flex-shrink: 0;
    border-bottom: 1px solid #a9c6ee;
    background: linear-gradient(#dbe6f6, #cddcf0);
}
.res-foot i {
    width: 1px;
    height: 12px;
    background-color: #a9c6ee;
}
.tabs {
    display: flex;
    align-items: flex-end;
    gap: 3px;
    height: 27px;
    margin-top: 2px;
    padding-left: 2px;
    background: linear-gradient(#d9e5f5, #cbdbf0);
    border-top: 1px solid #a9c6ee;
    border-bottom: 3px solid #a9c6ee;
}
.tab {
    display: flex;
    align-items: center;
    gap: 4px;
    height: 18px;
    padding: 0 8px 0 4px;
    font-size: 10px;
    color: #3f5f8f;
    background: linear-gradient(#e8f0fb, #d0def3);
    border: 1px solid #a9c6ee;
    border-bottom: 0;
    border-radius: 3px 3px 0 0;
}
.tab-chart {
    padding-right: 5px;
}
.tab.active {
    padding: 0 9px;
    font-weight: bold;
    color: #15428b;
    background: #e3ecf8;
}
.tab-ic {
    width: 15px;
    height: 15px;
}
.info {
    height: 92px;
    padding: 7px 0 0 4px;
    overflow: hidden;
    background-color: #dfe8f6;
}
.info-table {
    width: 845px;
    table-layout: fixed;
    border-collapse: collapse;
}
.info-table td {
    height: 13px;
    padding: 0 4px 0 6px;
    line-height: 11px;
    vertical-align: top;
    font-size: 10px;
    border: 1px solid #fff;
}
.tall-info td {
    height: 24px;
}
.lb {
    width: 130px;
    color: #a33c00;
}
.info-table td:nth-child(4) {
    width: 80px;
}
.info-table td:nth-child(7) {
    width: 96px;
}
.info-table td.cl {
    width: 6px;
    padding: 0;
    font-weight: bold;
    text-align: center;
}
.vl {
    font-weight: bold;
    width: 118px;
}
.info-table td:nth-child(6) {
    width: 126px;
}
.info-table td:nth-child(9) {
    width: 276px;
}
```
